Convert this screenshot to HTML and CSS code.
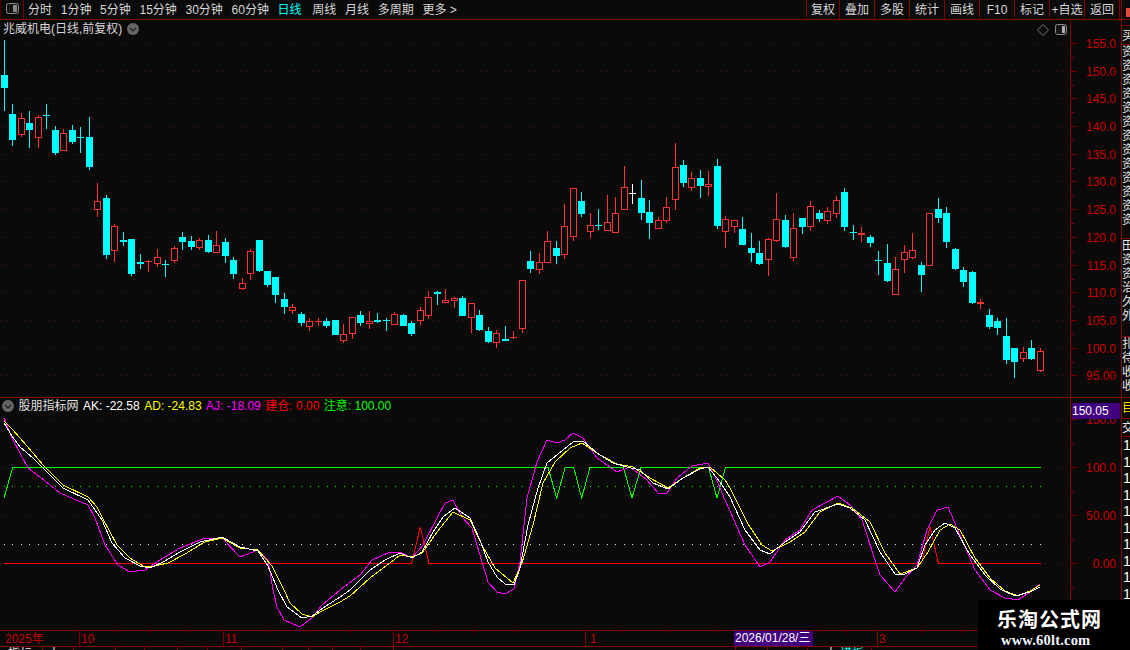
FILE: index.html
```html
<!DOCTYPE html>
<html lang="zh-CN">
<head>
<meta charset="utf-8">
<title>兆威机电 日线</title>
<link rel="stylesheet" href="styles.css">
</head>
<body>
<div class="app">
  <header class="toolbar">
    <div class="layout-cell">
      <svg class="panel-icon" width="13" height="12" viewBox="0 0 13 12"><rect x="0.5" y="0.5" width="12" height="10" rx="2" class="pi-frame"/><rect x="7" y="2" width="4" height="7" class="pi-fill"/></svg>
    </div>
    <nav class="periods">
      <span>分时</span><span>1分钟</span><span>5分钟</span><span>15分钟</span><span>30分钟</span><span>60分钟</span>
      <span class="active">日线</span><span>周线</span><span>月线</span><span>多周期</span><span>更多 &gt;</span>
    </nav>
    <div class="actions">
      <span>复权</span><span>叠加</span><span>多股</span><span>统计</span><span>画线</span><span>F10</span><span>标记</span><span>+自选</span><span>返回</span>
    </div>
    <div class="corner"><i></i></div>
  </header>

  <section class="row row-main">
    <div class="plot">
      <svg id="main-chart" width="1070" height="377" viewBox="0 20 1070 377"></svg>
      <div class="title-main">
        <span>兆威机电(日线,前复权)</span>
        <svg width="12" height="12" viewBox="0 0 12 12"><circle cx="6" cy="6" r="6" class="chev-bg"/><path d="M3 5l3 3 3-3" class="chev"/></svg>
      </div>
      <div class="tools-main">
        <svg width="12" height="12" viewBox="0 0 12 12"><path d="M6 .5L11.5 6 6 11.5 .5 6z" class="diamond"/></svg>
        <svg width="13" height="12" viewBox="0 0 13 12"><rect x="0.5" y="0.5" width="11" height="10" rx="2" class="pi-frame"/><rect x="7" y="2" width="3" height="7" class="pi-light"/></svg>
      </div>
    </div>
    <svg id="main-axis" class="axis" viewBox="1071 20 50 377"></svg>
    <aside class="side">
      <div class="side-group short"><span>买</span></div>
      <div class="side-group tall"><span>资</span><span>资</span><span>资</span><span>资</span><span>资</span><span>资</span><span>资</span><span>资</span><span>资</span><span>资</span><span>资</span><span>资</span><span>资</span></div>
      <div class="side-group mid"><span>田</span><span>资</span><span>资</span><span>治</span><span>久</span><span>外</span></div>
      <div class="side-group"><span>扎</span><span>待</span><span>收</span><span>收</span></div>
    </aside>
  </section>

  <section class="row row-ind">
    <div class="plot">
      <svg id="ind-chart" width="1070" height="232" viewBox="0 398 1070 232"></svg>
      <div class="title-ind">
        <svg width="12" height="12" viewBox="0 0 12 12"><circle cx="6" cy="6" r="6" class="chev-bg"/><path d="M3 5l3 3 3-3" class="chev"/></svg>
        <span class="name">股朋指标网</span>
        <span class="c-white">AK: -22.58</span>
        <span class="c-yellow">AD: -24.83</span>
        <span class="c-magenta">AJ: -18.09</span>
        <span class="c-red">建仓: 0.00</span>
        <span class="c-green">注意: 100.00</span>
      </div>
    </div>
    <div class="axis-wrap">
      <svg id="ind-axis" class="axis" viewBox="1071 398 50 232"></svg>
      <div class="price-tag">150.05</div>
    </div>
    <aside class="side side-ind">
      <div class="side-group yellow-cell"><span>目</span></div>
      <div class="side-group cell-jiao"><span>交</span></div>
      <div class="side-group digits"><span>1</span><span>1</span><span>1</span><span>1</span><span>1</span><span>1</span><span>1</span><span>1</span><span>1</span><span>1</span><span>1</span></div>
    </aside>
  </section>

  <section class="timeaxis">
    <svg id="time-axis" width="1130" height="15" viewBox="0 631 1130 15"></svg>
    <div class="date-tag">2026/01/28/三</div>
  </section>

  <svg id="footer" class="footer" width="1130" height="3" viewBox="0 647 1130 3"></svg>

  <div class="watermark">
    <div class="wm-cn">乐淘公式网</div>
    <div class="wm-en">www.60lt.com</div>
  </div>
</div>
<script src="script.js"></script>
</body>
</html>
```

FILE: styles.css
```css
* { box-sizing: border-box; }
html, body { margin: 0; padding: 0; }
body {
  width: 1130px;
  height: 650px;
  overflow: hidden;
  background: #0a0a0a;
  color: #d8d8d8;
  font: 12px/1 "Liberation Sans", "Noto Sans CJK SC", sans-serif;
}
svg { display: block; }
.app { position: relative; width: 1130px; height: 650px; display: flex; flex-direction: column; }

/* toolbar */
.toolbar {
  height: 20px;
  flex: none;
  display: flex;
  align-items: stretch;
  border-bottom: 1px solid #800000;
  background: #0a0a0a;
}
.layout-cell {
  width: 24px;
  flex: none;
  padding: 3px 0 0 5px;
  border-left: 1px solid #500000;
  border-right: 1px solid #800000;
}
.periods { flex: 1; display: flex; align-items: center; gap: 8.7px; padding-left: 4px; white-space: nowrap; }
.periods .active { color: #00ffff; margin-right: 2px; }
.actions { display: flex; flex: none; border-left: 1px solid #800000; margin-right: 1px; }
.actions span {
  width: 35px;
  display: flex;
  align-items: center;
  justify-content: center;
  border-right: 1px solid #800000;
  white-space: nowrap;
}
.actions span:first-child { width: 33px; }
.corner { width: 9px; flex: none; padding: 8px 0 0 4px; border-left: 1px solid #800000; }
.corner i { display: block; width: 5px; height: 9px; background: #e04a3a; }
.pi-frame { fill: #161616; stroke: #8a8a8a; }
.pi-fill { fill: #8a8a8a; }
.pi-light { fill: #b0b0b0; }
.chev-bg { fill: #666; }
.chev { fill: none; stroke: #1c1c1c; stroke-width: 1.2; }
.diamond { fill: none; stroke: #777; }

/* rows */
.row { display: flex; flex: none; }
.row-main { height: 378px; border-bottom: 1px solid #800000; }
.row-ind { height: 232px; }
.plot { position: relative; width: 1070px; flex: none; }
.axis { flex: none; width: 51px; height: 100%; border-left: 1px solid #800000; }
.axis-wrap { position: relative; width: 51px; flex: none; }

.title-main {
  position: absolute;
  left: 3px;
  top: 3px;
  display: flex;
  align-items: center;
  gap: 5px;
  height: 12px;
  white-space: nowrap;
}
.tools-main { position: absolute; left: 1037px; top: 4px; display: flex; gap: 6px; }
.title-ind {
  position: absolute;
  left: 2px;
  top: 2px;
  display: flex;
  align-items: center;
  gap: 4.5px;
  height: 12px;
  white-space: nowrap;
}
.title-ind .name { color: #e0e0e0; }
.c-white { color: #fff; }
.c-yellow { color: #ffff00; }
.c-magenta { color: #ff00ff; }
.c-red { color: #ff0000; }
.c-green { color: #00ff00; }

.price-tag {
  position: absolute;
  left: 2px;
  top: 5px;
  width: 48px;
  height: 16px;
  background: #400080;
  color: #fff;
  font-size: 12px;
  line-height: 16px;
}

/* side strip with the clipped quote column */
.side {
  width: 9px;
  flex: none;
  overflow: hidden;
  display: flex;
  flex-direction: column;
  border-left: 1px solid #800000;
  color: #e8e8e8;
}
.side-group { display: flex; flex-direction: column; flex: none; border-bottom: 1px solid #800000; overflow: hidden; }
.side-group span { display: block; height: 14px; line-height: 14px; width: 12px; flex: none; }
.side-group.short { height: 20px; padding-top: 3px; margin-top: 5px; border-top: 1px solid #800000; }
.side-group.tall { height: 194px; }
.side-group.mid { height: 98px; }
.side-group:last-child { border-bottom: 0; }
.yellow-cell { height: 21px; color: #ffd800; padding-top: 3px; }
.cell-jiao { height: 18px; padding-top: 2px; }
.digits { padding-left: 1px; }
.side-group.digits span { height: 16.5px; line-height: 16.5px; font-size: 14px; color: #fff; }

/* time axis */
.timeaxis {
  position: relative;
  height: 17px;
  flex: none;
  border-top: 1px solid #800000;
  border-bottom: 1px solid #800000;
}
.date-tag {
  position: absolute;
  left: 734px;
  top: 0;
  width: 79px;
  height: 15px;
  background: #400080;
  color: #fff;
  line-height: 15px;
  padding-left: 1px;
  white-space: nowrap;
}
.footer { flex: none; }

/* chart parts drawn by script.js */
.cyan { fill: #00ffff; }
.redc { fill: #ff3232; }
.whitec { fill: #ffffff; }
.hollow { fill: #0a0a0a; stroke: #ff3232; stroke-width: 1; }
.crisp { shape-rendering: crispEdges; }
.grid { stroke: #5a0c0c; stroke-width: 1; stroke-dasharray: 1 5; fill: none; }
.dots-green { stroke: #00ff00; stroke-width: 1; stroke-dasharray: 1 7.49; }
.dots-white { stroke: #e8e8e8; stroke-width: 1; stroke-dasharray: 1 7.49; }
.tick { stroke: #800000; stroke-width: 1; }
.axis-label { fill: #c80000; font: 12px "Liberation Sans", sans-serif; text-anchor: end; dominant-baseline: central; }
.time-label { fill: #c80000; font: 12px "Liberation Sans", "Noto Sans CJK SC", sans-serif; }
.ln { fill: none; stroke-width: 1; }
.ln-white { stroke: #ffffff; }
.ln-yellow { stroke: #ffff00; }
.ln-magenta { stroke: #ff00ff; }
.ln-green { stroke: #00ff00; }
.ln-red { stroke: #ff0000; }
.foot-text { fill: #e8e8e8; font: 12px "Noto Sans CJK SC", sans-serif; }
.foot-cyan { fill: #00ffff; font: 12px "Noto Sans CJK SC", sans-serif; }

/* watermark */
.watermark {
  position: absolute;
  right: 0;
  bottom: 0;
  width: 152px;
  height: 50px;
  background: #000;
  color: #fff;
  padding: 7px 0 0 19px;
}
.wm-cn { font: 700 20px/24px "Noto Sans CJK SC", sans-serif; letter-spacing: 1px; white-space: nowrap; }
.wm-en { font: 700 14.5px/17px "Liberation Serif", serif; margin: 1px 0 0 4px; letter-spacing: .2px; color: #f0f4ff; white-space: nowrap; }
```

FILE: script.js
```js
var NS = 'http://www.w3.org/2000/svg';
function el(parent, tag, attrs, text) {
  var n = document.createElementNS(NS, tag);
  for (var k in attrs) n.setAttribute(k, attrs[k]);
  if (text !== undefined) n.textContent = text;
  parent.appendChild(n);
  return n;
}
function hline(p, x1, x2, y, cls) { el(p, 'line', { x1: x1, x2: x2, y1: y + 0.5, y2: y + 0.5, 'class': cls }); }

/* wick top, body top, body bottom, wick bottom, kind (c = falling, r = rising, w = flat) */
var candles = [
[40,75,88,111,'c'],[104,114,140,146,'c'],[113,118,135,137,'r'],[111,123,130,148,'c'],[115,117,138,148,'r'],[104,115,116,129,'c'],
[126,130,153,155,'c'],[129,133,151,151,'r'],[125,130,142,144,'c'],[127,137,138,153,'c'],[117,137,167,170,'c'],[183,201,210,217,'r'],
[195,198,255,259,'c'],[224,226,251,262,'r'],[232,240,242,246,'c'],[239,239,274,276,'c'],[254,262,264,269,'c'],[260,261,262,272,'r'],
[249,257,264,267,'r'],[260,264,265,277,'c'],[246,248,261,263,'r'],[232,237,242,250,'c'],[236,241,247,250,'c'],[238,240,248,250,'r'],
[235,240,252,253,'c'],[231,245,253,253,'r'],[238,242,256,263,'c'],[257,260,274,279,'c'],[278,283,289,290,'r'],[249,251,274,280,'r'],
[240,240,271,272,'c'],[271,271,285,287,'c'],[277,277,295,303,'c'],[293,299,307,314,'c'],[304,307,311,314,'r'],[312,314,323,326,'c'],
[318,321,327,331,'r'],[318,321,322,326,'r'],[318,321,326,328,'c'],[320,320,335,335,'c'],[324,334,341,343,'r'],[317,317,334,339,'r'],
[311,315,323,326,'c'],[311,321,324,329,'r'],[313,320,322,323,'c'],[318,320,321,331,'c'],[312,314,325,325,'r'],[314,315,326,326,'c'],
[321,323,334,336,'c'],[307,310,321,325,'r'],[291,297,316,319,'r'],[291,292,294,305,'c'],[289,300,303,303,'r'],[297,298,301,308,'r'],
[296,298,316,316,'c'],[303,303,318,333,'r'],[310,315,330,331,'c'],[327,331,342,343,'c'],[330,333,343,348,'r'],[326,339,341,341,'c'],
[331,337,338,339,'r'],[280,280,329,333,'r'],[251,261,269,273,'c'],[253,262,270,274,'r'],[231,241,263,263,'r'],[241,248,256,264,'c'],
[204,226,255,259,'r'],[188,188,237,241,'r'],[192,201,214,217,'c'],[213,225,232,238,'r'],[209,225,226,230,'c'],[195,222,231,231,'r'],
[197,213,233,233,'r'],[166,187,210,210,'r'],[184,193,194,204,'w'],[180,198,213,220,'c'],[200,212,223,239,'c'],[217,220,229,229,'r'],
[197,207,221,223,'r'],[143,167,200,210,'r'],[160,165,183,187,'c'],[172,178,188,191,'r'],[170,178,186,198,'c'],[171,184,187,196,'r'],
[159,166,226,229,'c'],[216,219,232,248,'r'],[220,220,227,233,'r'],[217,229,245,245,'c'],[233,248,253,262,'c'],[241,253,264,265,'c'],
[238,239,260,276,'r'],[193,219,241,242,'r'],[215,220,247,248,'c'],[213,228,258,261,'r'],[218,218,227,234,'c'],[201,206,227,231,'r'],
[210,213,219,222,'c'],[207,211,221,224,'r'],[196,200,214,218,'r'],[188,192,227,231,'c'],[225,232,233,240,'c'],[227,233,235,242,'r'],
[235,237,243,247,'c'],[251,260,261,275,'c'],[244,263,281,282,'c'],[257,269,295,295,'r'],[245,252,260,273,'r'],[233,250,258,259,'r'],
[262,265,275,292,'c'],[213,213,266,266,'r'],[198,209,218,223,'c'],[207,213,242,248,'c'],[248,249,269,270,'c'],[267,270,282,287,'c'],
[271,272,303,304,'c'],[299,302,304,309,'r'],[309,315,327,329,'c'],[318,321,328,335,'c'],[318,336,360,364,'c'],[348,348,362,378,'c'],
[347,352,359,362,'r'],[340,348,359,360,'c'],[348,351,371,372,'r']
];

var mainLevels = [[43,'155.0'],[71,'150.0'],[98,'145.0'],[126,'140.0'],[154,'135.0'],[181,'130.0'],[209,'125.0'],[237,'120.0'],[265,'115.0'],[292,'110.0'],[320,'105.0'],[348,'100.0'],[375,'95.00']];

var mainChart = document.getElementById('main-chart');
var g = el(mainChart, 'g', { 'class': 'crisp' });
mainLevels.forEach(function (l) { hline(g, 0, 1067, l[0], 'grid'); });
candles.forEach(function (c, i) {
  var px = Math.floor(4.3 + 8.49 * i);
  var kind = c[4];
  var fill = kind === 'c' ? 'cyan' : kind === 'w' ? 'whitec' : 'redc';
  var h = c[2] - c[1];
  if (c[1] > c[0]) el(g, 'rect', { x: px, y: c[0], width: 1, height: c[1] - c[0], 'class': fill });
  if (c[3] > c[2]) el(g, 'rect', { x: px, y: c[2], width: 1, height: c[3] - c[2], 'class': fill });
  if (kind === 'r' && h > 2) {
    el(g, 'rect', { x: px - 2.5, y: c[1] + 0.5, width: 6, height: h - 1, 'class': 'hollow' });
  } else {
    el(g, 'rect', { x: px - 3, y: c[1], width: 7, height: Math.max(h, 1), 'class': fill });
  }
});

function drawAxis(svg, levels, minors) {
  var a = el(svg, 'g', { 'class': 'crisp' });
  levels.forEach(function (l) { hline(a, 1071, 1077, l[0], 'tick'); });
  minors.forEach(function (y) { hline(a, 1071, 1074, y, 'tick'); });
  levels.forEach(function (l) {
    el(svg, 'text', { x: 1116, y: l[0] + 1, 'class': 'axis-label' }, l[1]);
  });
}
var mainMinor = [];
for (var m = 0; m < mainLevels.length - 1; m++) mainMinor.push(Math.round((mainLevels[m][0] + mainLevels[m + 1][0]) / 2));
drawAxis(document.getElementById('main-axis'), mainLevels, mainMinor);

/* indicator */
var ak = [4,423,12,436,20,447,33,458,43,468,63,488,88,500,95,510,102,520,112,543,125,558,140,566,150,568,165,561,180,552,200,542,222,537,240,547,258,551,268,566,278,590,287,607,302,618,312,616,323,608,340,597,350,590,370,570,385,560,400,553,412,558,422,552,433,532,443,517,455,508,470,518,480,540,488,562,497,577,505,584,514,585,520,568,528,525,538,488,547,463,563,450,573,442,583,441,597,453,613,463,627,467,640,470,653,483,668,489,683,478,700,469,708,467,720,482,730,497,745,530,760,550,770,554,785,542,800,532,815,512,838,504,850,508,865,520,880,552,895,574,905,574,917,568,925,545,935,530,945,523,955,528,970,555,985,575,1000,589,1015,596,1030,592,1040,587];
var ad = [4,421,12,429,20,438,33,453,43,465,63,485,88,497,97,507,103,519,117,545,130,558,143,566,150,567,168,563,185,554,205,542,222,538,240,548,258,550,272,566,284,590,290,603,302,614,312,617,320,612,340,602,350,596,370,578,390,563,400,555,412,557,422,553,437,532,453,512,470,520,483,547,495,568,513,583,522,563,533,525,543,483,555,462,570,448,582,443,600,455,617,464,633,467,650,478,668,488,683,478,700,468,710,467,725,480,730,488,748,524,762,545,772,551,790,542,805,532,820,512,838,503,852,508,870,522,885,553,900,574,917,568,928,552,940,530,950,524,960,530,975,558,990,578,1005,591,1018,596,1030,591,1040,585];
var aj = [4,418,12,438,20,453,28,468,40,477,50,485,60,493,88,505,95,518,105,545,118,565,130,572,145,570,160,560,180,548,205,538,222,538,240,557,258,550,268,560,273,590,277,607,284,620,300,627,312,618,322,605,340,590,360,575,372,560,390,552,400,552,412,558,423,545,437,518,445,503,453,500,462,517,472,528,482,562,488,582,497,592,505,594,514,589,520,562,527,498,537,462,547,440,557,443,565,440,573,433,583,438,597,458,617,472,630,467,647,480,658,493,667,493,677,478,692,466,708,463,718,483,725,500,730,511,745,545,760,567,770,562,785,540,800,530,812,510,838,496,850,505,862,520,880,575,895,592,905,578,917,565,927,530,937,510,948,507,960,535,975,570,990,590,1005,598,1018,600,1030,592,1040,584];
var green = [4,498,12.7,467.5,548,467.5,556.7,498,565.2,467.5,573.7,467.5,581.7,498,590,467.5,623.5,467.5,632,498,641,467.5,708.5,467.5,717,498,725.5,467.5,1041,467.5];
var red = [4,563.5,411.5,563.5,420.3,527,429,563.5,921.5,563.5,930,527,938.5,563.5,1041,563.5];

var ind = document.getElementById('ind-chart');
var h = el(ind, 'g', { 'class': 'crisp' });
[419, 467, 515, 563].forEach(function (y) { hline(h, 0, 1067, y, 'grid'); });
el(h, 'line', { x1: 4, x2: 1042, y1: 486.5, y2: 486.5, 'class': 'dots-green' });
el(h, 'line', { x1: 4, x2: 1042, y1: 544.5, y2: 544.5, 'class': 'dots-white' });
[[green, 'ln-green'], [red, 'ln-red'], [aj, 'ln-magenta'], [ad, 'ln-yellow'], [ak, 'ln-white']].forEach(function (s) {
  el(h, 'polyline', { points: s[0].join(' '), 'class': 'ln ' + s[1] });
});

drawAxis(document.getElementById('ind-axis'),
  [[419,'150.0'],[467,'100.0'],[515,'50.00'],[563,'0.00']],
  [443, 491, 539, 587]);

/* time axis */
var t = document.getElementById('time-axis');
var tg = el(t, 'g', { 'class': 'crisp' });
[79, 223, 393, 585, 877].forEach(function (x) { el(tg, 'line', { x1: x + 0.5, x2: x + 0.5, y1: 631, y2: 646, 'class': 'tick' }); });
[115, 151, 187, 266, 308, 351, 436, 472, 516, 622, 666, 716, 818, 847, 920, 960].forEach(function (x) {
  el(tg, 'line', { x1: x + 0.5, x2: x + 0.5, y1: 631, y2: 633, 'class': 'tick' });
});
[[5, '2025年'], [81, '10'], [225, '11'], [395, '12'], [590, '1'], [879, '3']].forEach(function (l) {
  el(t, 'text', { x: l[0], y: 643, 'class': 'time-label' }, l[1]);
});

/* footer strip, almost entirely cut off by the window */
var f = document.getElementById('footer');
var fg = el(f, 'g', { 'class': 'crisp' });
[42, 73, 115, 144, 177, 207, 241, 282, 308, 332, 360, 393, 735, 767, 807, 871].forEach(function (x) {
  el(fg, 'line', { x1: x + 0.5, x2: x + 0.5, y1: 647, y2: 650, 'class': 'tick' });
});
el(f, 'text', { x: 8, y: 658, 'class': 'foot-text' }, '指标');
el(f, 'text', { x: 48, y: 658, 'class': 'foot-text' }, '大');
el(f, 'text', { x: 825, y: 658, 'class': 'foot-text' }, '大');
el(f, 'text', { x: 840, y: 658, 'class': 'foot-cyan' }, '模板');
```
